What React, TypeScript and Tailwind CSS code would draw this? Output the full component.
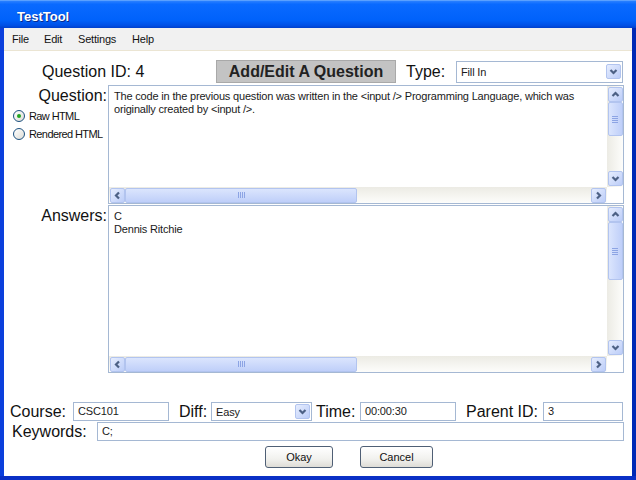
import React from 'react';

type Dir = 'up' | 'down' | 'left' | 'right';

const CHEVRONS: Record<Dir, string> = {
    up: '3.5,8 6.5,5 9.5,8',
    down: '3.5,5 6.5,8 9.5,5',
    left: '8,3.5 5,6.5 8,9.5',
    right: '5,3.5 8,6.5 5,9.5',
};

const Chevron = ({ dir }: { dir: Dir }) => (
    <svg width="13" height="13" viewBox="0 0 13 13">
        <polyline points={CHEVRONS[dir]} fill="none" stroke="#4d6185" strokeWidth="2.2" />
    </svg>
);

const ScrollBtn = ({ dir }: { dir: Dir }) => (
    <div className="w-[15px] h-[15px] shrink-0 rounded-[2px] border border-[#b2c4ef] bg-[linear-gradient(135deg,#e6edfe,#bccdf8)] flex items-center justify-center">
        <Chevron dir={dir} />
    </div>
);

// grip lines on the scroll thumbs
const Grip = ({ vertical }: { vertical?: boolean }) => (
    <div className={vertical ? 'flex flex-col gap-[1px]' : 'flex gap-[1px]'}>
        {[0, 1, 2, 3].map(i => (
            <div key={i} className={vertical ? 'w-[6px] h-[1px] bg-[#8ca4e4]' : 'w-[1px] h-[6px] bg-[#8ca4e4]'} />
        ))}
    </div>
);

const VScroll = ({ thumb }: { thumb: string }) => (
    <div className="w-[16px] shrink-0 flex flex-col items-center bg-[linear-gradient(to_right,#ecebe4,#fdfdfb)] py-[1px]">
        <ScrollBtn dir="up" />
        <div className={`w-[15px] ${thumb} rounded-[2px] border border-[#b2c4ef] bg-[linear-gradient(to_right,#dbe5fd,#bfcff9)] flex items-center justify-center`}>
            <Grip vertical />
        </div>
        <div className="flex-1" />
        <ScrollBtn dir="down" />
    </div>
);

const HScroll = () => (
    <div className="h-[16px] flex items-center bg-[linear-gradient(to_bottom,#ecebe4,#fdfdfb)] px-[1px]">
        <ScrollBtn dir="left" />
        <div className="h-[15px] w-[232px] rounded-[2px] border border-[#b2c4ef] bg-[linear-gradient(to_bottom,#dbe5fd,#bfcff9)] flex items-center justify-center">
            <Grip />
        </div>
        <div className="flex-1" />
        <ScrollBtn dir="right" />
    </div>
);

const ScrollBox = ({ h, thumb, children }: { h: string; thumb: string; children: React.ReactNode }) => (
    <div className={`${h} w-[516px] border border-[#a5b8d3] flex flex-col bg-white`}>
        <div className="flex flex-1 min-h-0">
            <div className="flex-1 pl-[5px] pt-[4px] text-[11px] leading-[13px] tracking-[-0.18px] text-[#1a1a1a]">{children}</div>
            <VScroll thumb={thumb} />
        </div>
        <div className="flex">
            <div className="flex-1"><HScroll /></div>
            <div className="w-[16px] bg-white" />
        </div>
    </div>
);

const Field = ({ w, value }: { w: string; value: string }) => (
    <div className={`${w} h-[19px] border border-[#a5b8d3] bg-white text-[11px] leading-[17px] pl-[4px] tracking-[-0.15px] text-[#1a1a1a]`}>
        {value}
    </div>
);

const Select = ({ w, h, value }: { w: string; h: string; value: string }) => (
    <div className={`${w} ${h} border border-[#a5b8d3] bg-white flex items-center text-[11px] tracking-[-0.15px] text-[#1a1a1a]`}>
        <span className="flex-1 pl-[4px]">{value}</span>
        <div className="mr-[1px]"><ScrollBtn dir="down" /></div>
    </div>
);

const Radio = ({ checked, label }: { checked?: boolean; label: string }) => (
    <div className="h-[18px] flex items-center pl-[9px] gap-[4px]">
        <div className="w-[12px] h-[12px] rounded-full border border-[#1c5180] bg-[linear-gradient(135deg,#ffffff,#dcdcd6)] flex items-center justify-center">
            {checked && <div className="w-[4px] h-[4px] rounded-full bg-[#21a421]" />}
        </div>
        <span className="text-[11px] tracking-[-0.6px] text-[#111] whitespace-nowrap">{label}</span>
    </div>
);

const Button = ({ w, label }: { w: string; label: string }) => (
    <div className={`${w} h-[22px] rounded-[3px] border border-[#4f5f75] bg-[linear-gradient(to_bottom,#ffffff,#f1f1ee_60%,#dedcd6)] flex items-center justify-center text-[11px] text-[#111]`}>
        {label}
    </div>
);

const App: React.FC = () => {
    return (
        <div className="w-[636px] h-[480px] flex flex-col font-['Liberation_Sans',Arial,sans-serif] text-[#111] overflow-hidden">
            {/* Title bar */}
            <div className="h-[28px] shrink-0 flex items-center pl-[17px] pt-[5px] border-t border-[#5aa0ff] bg-[linear-gradient(to_bottom,#2a80ff_0%,#0a6aff_12%,#0062fb_70%,#0050e6_90%,#0040cc_100%)] text-white font-bold text-[13px] [text-shadow:1px_1px_0_#0a2a8c]">
                TestTool
            </div>

            <div className="flex-1 flex min-h-0">
                <div className="w-[4px] bg-[#0b3fdc]" />
                <div className="flex-1 flex flex-col bg-white">
                    {/* Menu */}
                    <div className="h-[23px] shrink-0 flex items-center pl-[8px] bg-[#f1f1f1] border-b border-[#ebe5d3] text-[11px] tracking-[-0.2px]">
                        <span className="w-[32px]">File</span>
                        <span className="w-[34px]">Edit</span>
                        <span className="w-[54px]">Settings</span>
                        <span>Help</span>
                    </div>

                    {/* Header row */}
                    <div className="mt-[9px] h-[23px] flex items-center text-[16px] leading-[18px]">
                        <span className="ml-[38px] w-[174px]">Question ID: 4</span>
                        <div className="w-[180px] h-[23px] bg-[#c3c3c3] border border-[#a9a9a9] flex items-center justify-center font-bold text-[#222]">
                            Add/Edit A Question
                        </div>
                        <span className="ml-[10px] w-[50px]">Type:</span>
                        <Select w="w-[167px]" h="h-[22px]" value="Fill In" />
                    </div>

                    {/* Question */}
                    <div className="mt-[2px] flex">
                        <div className="w-[104px] flex flex-col">
                            <div className="text-[16px] leading-[18px] text-right pr-[1px] pt-[2px]">Question:</div>
                            <div className="mt-[2px]">
                                <Radio checked label="Raw HTML" />
                                <Radio label="Rendered HTML" />
                            </div>
                        </div>
                        <ScrollBox h="h-[119px]" thumb="h-[34px]">
                            The code in the previous question was written in the &lt;input /&gt; Programming Language, which was
                            <br />
                            originally created by &lt;input /&gt;.
                        </ScrollBox>
                    </div>

                    {/* Answers */}
                    <div className="mt-[1px] flex">
                        <div className="w-[104px] text-[16px] leading-[18px] text-right pr-[1px] pt-[2px]">Answers:</div>
                        <ScrollBox h="h-[168px]" thumb="h-[58px]">
                            C
                            <br />
                            Dennis Ritchie
                        </ScrollBox>
                    </div>

                    {/* Meta fields */}
                    <div className="mt-[29px] h-[19px] flex items-center pl-[6px] text-[16px] leading-[18px]">
                        <span className="w-[63px]">Course:</span>
                        <Field w="w-[96px]" value="CSC101" />
                        <span className="ml-[10px] w-[32px]">Diff:</span>
                        <Select w="w-[101px]" h="h-[19px]" value="Easy" />
                        <span className="ml-[4px] w-[44px]">Time:</span>
                        <Field w="w-[96px]" value="00:00:30" />
                        <span className="ml-[10px] w-[77px]">Parent ID:</span>
                        <Field w="w-[80px]" value="3" />
                    </div>
                    <div className="mt-[1px] h-[19px] flex items-center pl-[8px] pr-[8px] text-[16px] leading-[18px]">
                        <span className="w-[85px]">Keywords:</span>
                        <Field w="flex-1" value="C;" />
                    </div>

                    {/* Buttons */}
                    <div className="mt-[5px] flex pl-[261px] gap-[27px]">
                        <Button w="w-[68px]" label="Okay" />
                        <Button w="w-[73px]" label="Cancel" />
                    </div>
                </div>
                <div className="w-[4px] bg-[#0029b5]" />
            </div>
            <div className="h-[4px] shrink-0 bg-[#0a30c6]" />
        </div>
    );
};

export default App;
